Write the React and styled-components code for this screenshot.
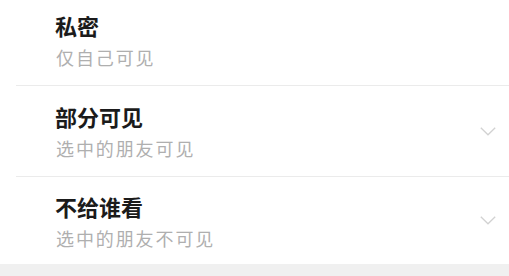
import React from 'react'
import styled, { createGlobalStyle } from 'styled-components'

const GlobalStyle = createGlobalStyle`
  html, body {
    margin: 0;
    padding: 0;
    background: #ffffff;
  }
  body {
    font-family: "Noto Sans CJK SC", "Noto Sans", sans-serif;
    -webkit-font-smoothing: antialiased;
  }
`

const options = [
  { title: '私密', desc: '仅自己可见', expandable: false },
  { title: '部分可见', desc: '选中的朋友可见', expandable: true },
  { title: '不给谁看', desc: '选中的朋友不可见', expandable: true },
]

function Chevron() {
  return (
    <ChevronSvg viewBox="0 0 16 9" width="16" height="9">
      <path d="M0.8 0.8 L8 7.8 L15.2 0.8" fill="none" stroke="#d2d2d2" strokeWidth="1.3" />
    </ChevronSvg>
  )
}

export default function App() {
  return (
    <>
      <GlobalStyle />
      <Page>
        <List>
          {options.map((o) => (
            <Row key={o.title}>
              <Texts>
                <Title>{o.title}</Title>
                <Desc>{o.desc}</Desc>
              </Texts>
              {o.expandable && <Chevron />}
            </Row>
          ))}
        </List>
        <Footer />
      </Page>
    </>
  )
}

const Page = styled.div`
  width: 509px;
  height: 276px;
  overflow: hidden;
  display: flex;
  flex-direction: column;
`
const List = styled.div`
  margin-left: 16px;
  margin-top: -5px;
  display: flex;
  flex-direction: column;
`
const Row = styled.div`
  height: 90px;
  display: flex;
  align-items: center;
  justify-content: space-between;
  padding: 0 13px 0 40px;
  border-bottom: 1px solid #ebebeb;
  &:last-child {
    border-bottom: none;
    height: 87px;
  }
`
const Texts = styled.div`
  display: flex;
  flex-direction: column;
  gap: 6px;
`
const Title = styled.div`
  font-size: 22px;
  line-height: 28px;
  font-weight: 700;
  color: #1b1b1b;
  margin-left: -1px;
`
const Desc = styled.div`
  font-size: 18px;
  line-height: 24px;
  color: #afafaf;
  letter-spacing: 1.9px;
`
const ChevronSvg = styled.svg`
  display: block;
`
const Footer = styled.div`
  flex: 1;
  background: #f0f0f0;
`
